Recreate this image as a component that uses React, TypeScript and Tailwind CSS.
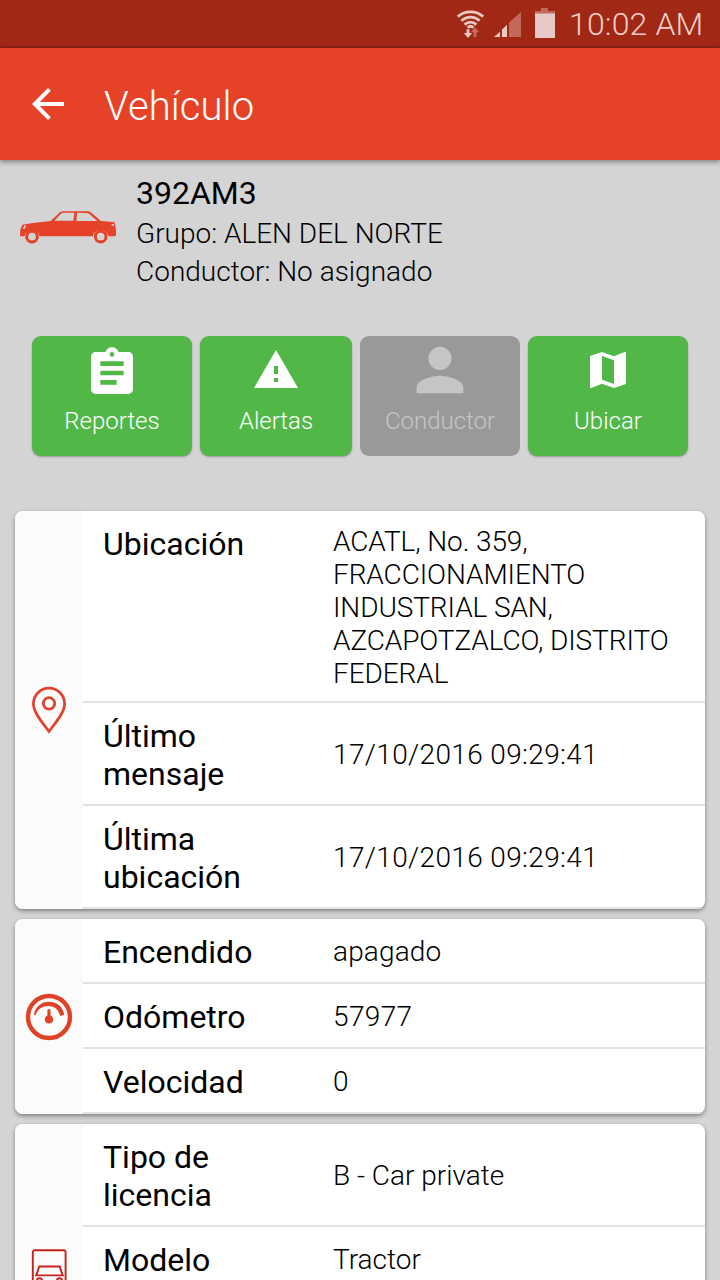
import React from 'react';
import clsx from 'clsx';

const WifiIcon = () => (
  <svg width="30" height="30" viewBox="0 0 30 30" fill="none" stroke="#edc9c4" strokeWidth="2.8">
    <path d="M1.8 7.6C8.8 1.2 20.2 1.2 27.2 7.6" />
    <path d="M5.4 11.8C10.8 7 18.2 7 23.6 11.8" />
    <path d="M8.6 15.6C12.4 12.4 16.6 12.4 20.4 15.6" />
    <path d="M11.6 18.6C13.4 17 15.6 17 17.4 18.6" />
    <path d="M12 20.2v6" />
    <path d="M7.8 24h8.4L12 29z" fill="#edc9c4" stroke="none" />
    <path d="M19 28v-6.5" stroke="#c46c5c" />
    <path d="M15 23.2h8L19 18z" fill="#c46c5c" stroke="none" />
  </svg>
);

const SignalIcon = () => (
  <svg width="28" height="26" viewBox="0 0 28 26">
    <path d="M0 25l6-5.2V25zM8 25v-7.5l5-4.7V25z" fill="#edc9c4" />
    <path d="M15 25V10.5L27 0v25z" fill="#c06a5c" />
  </svg>
);

const BatteryIcon = () => (
  <svg width="20" height="30" viewBox="0 0 20 30">
    <path d="M6 0h7v3h7v3H0V3h6z" fill="#c06a5c" />
    <path d="M0 5.5h20V30H0z" fill="#e7c9c8" />
  </svg>
);

const CarIcon = () => (
  <svg width="97" height="33" viewBox="60 125 291 99">
    <path
      fill="#e64228"
      fillRule="evenodd"
      d="M60 201l1-20 6-15c30-6 60-8 85-11l28-26q4-3 10-3h72q7 0 12 4l29 25 37 3q5 1 6 8l2 18v12q0 5-5 5h-18a24 24 0 0 0-47 0H119a24 24 0 0 0-46 0zM163 154h57l3-24h-32q-5 0-8 3zM229 155h63l-23-20q-4-4-10-4l-28-1zM68 178l6-10 5 1-6 10zM334 164h7l2 5h-7z"
    />
    <circle cx="96" cy="202" r="16" fill="none" stroke="#e64228" strokeWidth="9" />
    <circle cx="302" cy="202" r="16" fill="none" stroke="#e64228" strokeWidth="9" />
  </svg>
);

const PinIcon = () => (
  <svg width="36" height="48" viewBox="0 0 36 48" fill="none" stroke="#e04430" strokeWidth="2.8">
    <path d="M18 45.5C11 36 2.4 26.5 2.4 17.8a15.6 15.6 0 0 1 31.2 0C33.6 26.5 25 36 18 45.5z" />
    <circle cx="18" cy="17.4" r="5.7" />
  </svg>
);

const GaugeIcon = () => (
  <svg width="48" height="48" viewBox="0 0 48 48">
    <circle cx="24" cy="24" r="21" fill="none" stroke="#e04228" strokeWidth="4.4" />
    <path d="M8.8 22C10.2 13.5 16.5 8.8 24 8.8c8 0 13.800 5 15.3 13l-4 1.2c-1.800-6.600-5.700-10-11.800-10-6.200 0-10.800 3-13 9z" fill="#e04228" />
    <path d="M22.400 17.500q0-1.500 1.600-1.500t1.600 1.500v5a4.200 4.200 0 1 1-3.200 0z" fill="#e04228" />
  </svg>
);

const LicenseIcon = () => (
  <svg width="36" height="48" viewBox="0 0 36 48" fill="none" stroke="#c5221c" strokeWidth="1.9">
    <rect x="1.8" y="1.3" width="32.800" height="45.5" rx="2" />
    <path d="M5.200 26.400L8.300 17.500h20.400l3.100 8.900z" />
    <circle cx="8.500" cy="31.800" r="2.600" />
    <circle cx="28.500" cy="31.800" r="2.600" />
  </svg>
);

const actions = [
  {
    text: 'Reportes',
    size: 56,
    className: 'w-40 pt-[3px]',
    path: 'M19 3h-4.180C14.400 1.840 13.300 1 12 1c-1.300 0-2.400.84-2.820 2H5c-1.100 0-2 .9-2 2v14c0 1.100.9 2 2 2h14c1.100 0 2-.9 2-2V5c0-1.100-.9-2-2-2zm-7 0c.55 0 1 .45 1 1s-.45 1-1 1-1-.45-1-1 .45-1 1-1zm2 14H7v-2h7v2zm3-4H7v-2h10v2zm0-4H7V7h10v2z',
  },
  {
    text: 'Alertas',
    size: 48,
    className: 'w-[152px]',
    path: 'M1 21h22L12 2 1 21zm12-3h-2v-2h2v2zm0-4h-2v-4h2v4z',
  },
  {
    text: 'Conductor',
    size: 70,
    className: 'w-40',
    disabled: true,
    path: 'M12 12c2.210 0 4-1.790 4-4s-1.790-4-4-4-4 1.790-4 4 1.790 4 4 4zm0 2c-2.670 0-8 1.340-8 4v2h16v-2c0-2.660-5.330-4-8-4z',
  },
  {
    text: 'Ubicar',
    size: 48,
    className: 'w-40',
    path: 'M20.500 3l-.16.030L15 5.100 9 3 3.360 4.900c-.21.070-.36.250-.36.480V20.500c0 .28.220.5.500.5l.16-.030L9 18.900l6 2.100 5.640-1.900c.21-.070.36-.250.36-.480V3.500c0-.28-.22-.5-.5-.5zM15 19l-6-2.110V5l6 2.110V19z',
  },
];

const cards = [
  {
    icon: <PinIcon />,
    rows: [
      {
        label: 'Ubicación',
        value: 'ACATL, No. 359, FRACCIONAMIENTO INDUSTRIAL SAN, AZCAPOTZALCO, DISTRITO FEDERAL',
        tracking: 'tracking-[-0.1px]',
      },
      { label: 'Último mensaje', value: '17/10/2016 09:29:41', tracking: 'tracking-[0.36px]' },
      { label: 'Última ubicación', value: '17/10/2016 09:29:41', tracking: 'tracking-[0.36px]' },
    ],
  },
  {
    icon: <GaugeIcon />,
    rows: [
      { label: 'Encendido', value: 'apagado', tracking: 'tracking-[0.15px]' },
      { label: 'Odómetro', value: '57977', tracking: 'tracking-[0.36px]' },
      { label: 'Velocidad', value: '0' },
    ],
  },
  {
    icon: <LicenseIcon />,
    className: 'h-[298px]',
    rows: [
      { label: 'Tipo de licencia', value: 'B - Car private' },
      { label: 'Modelo', value: 'Tractor' },
    ],
  },
];

const App = () => {
  return (
    <div className="h-[1280px] w-[720px] overflow-hidden bg-[#d4d4d4] font-['Roboto',sans-serif] text-black">
      {/* status bar */}
      <div className="flex h-12 items-start bg-[#a02815] pl-[456px] shadow-[inset_0_-3px_3px_-2px_#7d1e10]">
        <div className="pt-[9px]">
          <WifiIcon />
        </div>
        <div className="ml-2 pt-3">
          <SignalIcon />
        </div>
        <div className="ml-[13px] pt-2">
          <BatteryIcon />
        </div>
        <p className="ml-[14px] whitespace-nowrap text-[32px] font-[350] leading-[48px] tracking-[0.15px] text-[#f3cfc8]">
          10:02 AM
        </p>
      </div>

      {/* toolbar */}
      <header className="flex h-28 items-center bg-[#e64228] pl-6 text-white shadow-[0_2px_5px_rgba(0,0,0,0.4)]">
        <svg width="48" height="48" viewBox="0 0 24 24" fill="currentColor">
          <path d="M20 11H7.830l5.590-5.590L12 4l-8 8 8 8 1.410-1.410L7.830 13H20v-2z" />
        </svg>
        <h1 className="ml-8 pt-1.5 text-[40px] font-light tracking-[0.1px]">Vehículo</h1>
      </header>

      {/* vehicle */}
      <section className="flex h-[176px] pl-5">
        <div className="w-[116px] pt-[51px]">
          <CarIcon />
        </div>
        <div className="pt-[13px]">
          <p className="mb-0.5 text-[32px] leading-10">392AM3</p>
          <p className="text-[28px] font-light leading-[38px]">Grupo: ALEN DEL NORTE</p>
          <p className="text-[28px] font-light leading-[38px]">Conductor: No asignado</p>
        </div>
      </section>

      {/* actions */}
      <div className="flex gap-2 px-8">
        {actions.map((action) => (
          <button
            key={action.text}
            disabled={action.disabled}
            className={clsx(
              'flex h-[120px] flex-col items-center rounded-[9px]',
              action.disabled
                ? 'bg-[#999999] text-[#c5c5c5]'
                : 'bg-[#51b848] text-white shadow-[0_1px_2px_rgba(0,0,0,0.3)]',
              action.className,
            )}
          >
            <span className="flex h-[68px] items-center">
              <svg width={action.size} height={action.size} viewBox="0 0 24 24" fill="currentColor">
                <path d={action.path} />
              </svg>
            </span>
            <span className={clsx('text-2xl font-light', action.size === 56 ? '-mt-0.5' : 'mt-px')}>{action.text}</span>
          </button>
        ))}
      </div>

      {/* cards */}
      <div className="mt-[55px] flex flex-col gap-[10px] px-[15px]">
        {cards.map((card, i) => (
          <div
            key={i}
            className={clsx('flex overflow-hidden rounded-lg bg-white shadow-[0_2px_4px_rgba(0,0,0,0.4)]', card.className)}
          >
            <div className="flex w-[68px] shrink-0 items-center justify-center bg-[#fbfbfb]">{card.icon}</div>
            <div className="flex-1">
              {card.rows.map((row) => (
                <div key={row.label} className="flex border-b-2 border-[#e2e2e2] pb-[11.5px] pl-5 pt-[13.5px]">
                  <p className="w-[190px] text-[32px] leading-[38px]">{row.label}</p>
                  <p className={clsx('ml-10 w-[350px] self-center text-[28px] font-light leading-[33px]', row.tracking)}>
                    {row.value}
                  </p>
                </div>
              ))}
            </div>
          </div>
        ))}
      </div>
    </div>
  );
};

export default App;
